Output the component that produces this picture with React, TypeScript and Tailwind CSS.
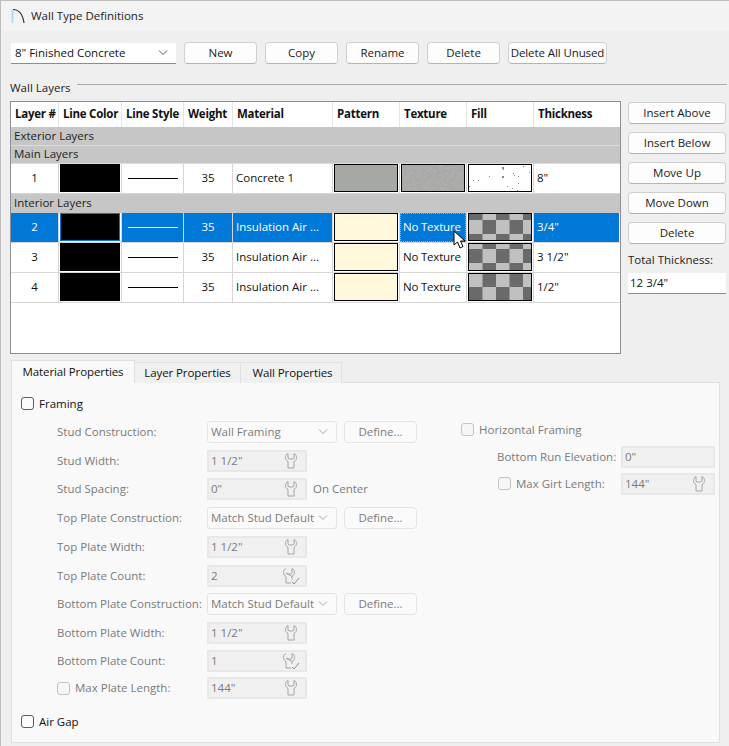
import type { ReactNode } from "react";

const COLUMNS = [
  { label: "Layer #", width: "w-[48px]" },
  { label: "Line Color", width: "w-[63px]" },
  { label: "Line Style", width: "w-[62px]" },
  { label: "Weight", width: "w-[49px]" },
  { label: "Material", width: "w-[100px]" },
  { label: "Pattern", width: "w-[67px]" },
  { label: "Texture", width: "w-[67px]" },
  { label: "Fill", width: "w-[67px]" },
  { label: "Thickness", width: "w-[85px]" },
];

const SPECKS = [
  [33, 2, 2], [44, 8, 1], [33, 11, 2], [20, 11, 1], [4, 15, 1], [9, 15, 1], [49, 11, 1],
  [49, 18, 1], [60, 7, 1], [54, 1, 1], [38, 21, 1], [43, 23, 1], [48, 25, 1], [0, 21, 1],
  [45, 10, 1], [34, 4, 1],
];

function WrenchIcon({ check }: { check?: boolean }) {
  return (
    <svg width="18" height="18" viewBox="0 0 18 18" fill="none" stroke="#a4a4a4" strokeWidth="1">
      <path d={check ? "M4 1.5 C2 2.5 1.5 4 1.5 5.5 C1.5 7.5 2.5 8.5 4 9.5 V16 H9 M10 9.5 C11.5 8.5 12.5 7.5 12.5 5.5 C12.5 4 12 2.5 10 1.5 V6 L9 7 H5 L4 6 Z M10 9.5 V12" : "M6 1.5 C4 2.5 3.5 4 3.5 5.5 C3.5 7.5 4.5 8.5 6 9.5 V16 H12 V9.5 C13.5 8.5 14.5 7.5 14.5 5.5 C14.5 4 14 2.5 12 1.5 V6 L11 7 H7 L6 6 Z"} />
      {check && <path d="M10 15 L12 17 L17 11" stroke="#8c8c8c" />}
    </svg>
  );
}

function Chevron({ color }: { color: string }) {
  return (
    <svg width="10" height="6" viewBox="0 0 10 6" fill="none" stroke={color} strokeWidth="1">
      <path d="M1 0.5 L5 4.5 L9 0.5" />
    </svg>
  );
}

function Button({ children, className }: { children: ReactNode; className: string }) {
  return (
    <button className={`flex h-[22px] items-center justify-center rounded-[4px] border border-[#d0d0d0] border-b-[#b4b4b4] bg-[#fdfdfd] text-[#1a1a1a] ${className}`}>
      {children}
    </button>
  );
}

function Checkbox({ disabled }: { disabled?: boolean }) {
  return (
    <span
      className={`block size-[13px] shrink-0 rounded-[3px] border ${
        disabled ? "border-[#c4c4c4] bg-[#f6f6f6]" : "border-[#5c5c5c] bg-[#fbfbfb]"
      }`}
    />
  );
}

function Checker({ startDark, id, offset }: { startDark: boolean; id: string; offset: number }) {
  const dark = "#6a6a6a";
  const light = "#c0c0c0";
  return (
    <svg width="63" height="26" className="block">
      <defs>
        <pattern id={id} width="27" height="28" patternUnits="userSpaceOnUse" patternTransform={`translate(0 ${offset})`}>
          <rect width="27" height="28" fill={startDark ? dark : light} />
          <rect x="13.5" width="13.5" height="14" fill={startDark ? light : dark} />
          <rect y="14" width="13.5" height="14" fill={startDark ? light : dark} />
        </pattern>
      </defs>
      <rect width="63" height="26" fill={`url(#${id})`} />
    </svg>
  );
}

function Swatch({ children, className }: { children?: ReactNode; className?: string }) {
  return (
    <div className={`mx-[1px] h-[28px] w-[65px] overflow-hidden border border-black ${className ?? ""}`}>
      {children}
    </div>
  );
}

function LayerRow({
  n,
  material,
  thickness,
  selected,
  id,
  startDark,
  offset,
}: {
  n: number;
  material: string;
  thickness: string;
  selected?: boolean;
  id: string;
  startDark: boolean;
  offset: number;
}) {
  const text = selected ? "text-white" : "text-[#111]";
  const cell = `flex h-full items-center border-r border-[#d6d6d6] ${text} ${selected ? "bg-[#0078d7]" : "bg-white"}`;
  return (
    <div className="flex h-[30px] border-b border-[#d6d6d6]">
      <div className={`${cell} w-[48px] justify-center`}>{n}</div>
      <div className="flex h-full w-[63px] items-center justify-center border-r border-[#d6d6d6] bg-white">
        <div className={`h-[28px] w-[60px] bg-black ${selected ? "border border-[#0078d7]" : ""}`} />
      </div>
      <div className={`${cell} w-[62px] justify-center`}>
        <div className={`h-px w-[50px] ${selected ? "bg-white" : "bg-black"}`} />
      </div>
      <div className={`${cell} w-[49px] justify-center`}>35</div>
      <div className={`${cell} w-[100px] pl-[3px]`}>{material}</div>
      <div className="flex h-full w-[67px] items-center border-r border-[#d6d6d6] bg-white">
        <Swatch className="bg-[#fff8dc]" />
      </div>
      <div className="flex h-full w-[67px] items-center border-r border-[#d6d6d6] bg-white">
        <div
          className={`flex h-full w-full items-center pl-[2px] tracking-[-0.2px] ${
            selected ? "border border-dotted border-[#f0a040] bg-[#0078d7] text-white" : "pl-[3px] text-[#111]"
          }`}
        >
          No Texture
        </div>
      </div>
      <div className="flex h-full w-[67px] items-center border-r border-[#d6d6d6] bg-white">
        <Swatch>
          <Checker id={id} startDark={startDark} offset={offset} />
        </Swatch>
      </div>
      <div className={`${cell} w-[85px] border-r-0 pl-[3px]`}>{thickness}</div>
    </div>
  );
}

function ConcreteRow() {
  return (
    <div className="flex h-[30px] border-b border-[#d6d6d6] bg-white text-[#111]">
      <div className="flex w-[48px] items-center justify-center border-r border-[#d6d6d6]">1</div>
      <div className="flex w-[63px] items-center justify-center border-r border-[#d6d6d6]">
        <div className="h-[28px] w-[60px] bg-black" />
      </div>
      <div className="flex w-[62px] items-center justify-center border-r border-[#d6d6d6]">
        <div className="h-px w-[50px] bg-black" />
      </div>
      <div className="flex w-[49px] items-center justify-center border-r border-[#d6d6d6]">35</div>
      <div className="flex w-[100px] items-center border-r border-[#d6d6d6] pl-[3px]">Concrete 1</div>
      <div className="flex w-[67px] items-center border-r border-[#d6d6d6]">
        <Swatch className="bg-[#a6a8a4]" />
      </div>
      <div className="flex w-[67px] items-center border-r border-[#d6d6d6]">
        <Swatch>
          <svg width="63" height="26" className="block">
            <filter id="concrete" x="0" y="0" width="100%" height="100%">
              <feTurbulence type="fractalNoise" baseFrequency="0.4" numOctaves="3" seed="4" />
              <feColorMatrix type="saturate" values="0" />
            </filter>
            <rect width="63" height="26" fill="#a8a9a7" />
            <rect width="63" height="26" filter="url(#concrete)" opacity="0.3" />
          </svg>
        </Swatch>
      </div>
      <div className="flex w-[67px] items-center border-r border-[#d6d6d6]">
        <Swatch className="bg-white">
          <svg width="63" height="26" className="block">
            {SPECKS.map(([x, y, s]) => (
              <rect key={`${x}-${y}`} x={x} y={y} width={s} height={s} fill="#8a8a8a" />
            ))}
          </svg>
        </Swatch>
      </div>
      <div className="flex w-[85px] items-center pl-[3px]">8"</div>
    </div>
  );
}

function SectionRow({ label, className }: { label: string; className: string }) {
  return (
    <div className={`flex items-center border-b border-[#dcdcdc] bg-[#c6c6c6] pl-[3px] text-[#222] ${className}`}>
      {label}
    </div>
  );
}

function Select({ value }: { value: string }) {
  return (
    <div className="flex h-[22px] w-[130px] items-center justify-between rounded-[3px] border border-[#e4e4e4] bg-[#fafafa] pl-[3px] pr-[8px] text-[#7a7a7a]">
      {value}
      <Chevron color="#a8a8a8" />
    </div>
  );
}

function Field({ value, w = "w-[100px]", icon = "wrench" }: { value: string; w?: string; icon?: "wrench" | "check" | "none" }) {
  return (
    <div className={`flex h-[22px] items-center justify-between border-2 border-[#e8e8e8] bg-[#f0f0f0] pl-[2px] pr-[5px] text-[#7a7a7a] ${w}`}>
      {value}
      {icon !== "none" && <WrenchIcon check={icon === "check"} />}
    </div>
  );
}

function DefineButton() {
  return (
    <div className="ml-[7px] flex h-[22px] w-[73px] items-center justify-center rounded-[4px] border border-[#e4e4e4] bg-[#fafafa] text-[#7a7a7a]">
      Define...
    </div>
  );
}

function FormRow({ label, height, children, check }: { label: string; height: string; children: ReactNode; check?: boolean }) {
  return (
    <div className={`flex items-center ${height}`}>
      <div className="flex w-[150px] items-center text-[#7a7a7a]">
        {check && (
          <span className="mr-[5px]">
            <Checkbox disabled />
          </span>
        )}
        {label}
      </div>
      {children}
    </div>
  );
}

export default function App() {
  return (
    <div className="h-[746px] w-[729px] overflow-hidden whitespace-nowrap border-l border-t border-[#bdbdbd] bg-[#efefef] text-[11.5px] leading-none text-[#111] [font-family:'Open_Sans','Noto_Sans',sans-serif]">
      {/* title bar */}
      <div className="flex h-[30px] items-center bg-[#f3f3f3] pl-[9px]">
        <svg width="16" height="16" viewBox="0 0 16 16" fill="none">
          <path d="M1.5 15 V2 H3.5 V15 Z" fill="#a8dcf5" />
          <path d="M3 1.5 C8 1.5 12.5 5 14 15" stroke="#333" strokeWidth="1.2" />
        </svg>
        <span className="ml-[5px] text-[#222]">Wall Type Definitions</span>
      </div>

      {/* type selector and buttons */}
      <div className="mt-[11px] flex items-center pl-[10px]">
        <div className="flex h-[21px] w-[165px] items-center justify-between border-b border-[#8c8c8c] bg-white pl-[4px] pr-[8px] text-[#111]">
          8" Finished Concrete
          <Chevron color="#555" />
        </div>
        <Button className="ml-[8px] w-[73px]">New</Button>
        <Button className="ml-[8px] w-[73px]">Copy</Button>
        <Button className="ml-[8px] w-[73px]">Rename</Button>
        <Button className="ml-[8px] w-[73px]">Delete</Button>
        <Button className="ml-[8px] w-[99px] tracking-[-0.1px]">Delete All Unused</Button>
      </div>

      {/* wall layers group */}
      <div className="mt-[18px] flex items-center pl-[9px] pr-[2px]">
        <span className="text-[#222]">Wall Layers</span>
        <div className="ml-[6px] h-px flex-1 -translate-y-[3px] bg-[#a8a8a8]" />
      </div>
      <div className="mt-[7px] flex pl-[9px]">
        <div className="h-[253px] w-[611px] border border-[#8e8e96] bg-white">
          <div className="flex h-[25px] font-bold tracking-[-0.25px] text-[#111]">
            {COLUMNS.map((c, i) => (
              <div
                key={c.label}
                className={`flex items-center pl-[4px] ${c.width} ${i < COLUMNS.length - 1 ? "border-r border-[#e4e4e4]" : ""}`}
              >
                {c.label}
              </div>
            ))}
          </div>
          <SectionRow label="Exterior Layers" className="h-[19px]" />
          <SectionRow label="Main Layers" className="h-[18px]" />
          <ConcreteRow />
          <SectionRow label="Interior Layers" className="h-[19px] border-b-0" />
          <LayerRow n={2} material="Insulation Air ..." thickness={'3/4"'} selected id="fill2" startDark offset={-8} />
          <LayerRow n={3} material="Insulation Air ..." thickness={'3 1/2"'} id="fill3" startDark={false} offset={-9} />
          <LayerRow n={4} material="Insulation Air ..." thickness={'1/2"'} id="fill4" startDark={false} offset={-1} />
        </div>

        <div className="ml-[7px] mt-[1px] flex w-[98px] flex-col">
          <Button className="w-full">Insert Above</Button>
          <Button className="mt-[8px] w-full">Insert Below</Button>
          <Button className="mt-[8px] w-full">Move Up</Button>
          <Button className="mt-[8px] w-full">Move Down</Button>
          <Button className="mt-[8px] w-full">Delete</Button>
          <div className="mt-[10px] text-[#222]">Total Thickness:</div>
          <div className="mt-[8px] flex h-[21px] items-center border-b border-[#8c8c8c] bg-white pl-[2px]">12 3/4"</div>
        </div>
      </div>

      {/* tabs */}
      <div className="relative z-10 mt-[6px] flex items-end pl-[10px] tracking-[-0.1px]">
        <div className="flex h-[23px] w-[124px] items-center justify-center border border-b-0 border-[#e0e0e0] bg-[#f9f9f9] text-[#111]">
          Material Properties
        </div>
        <div className="flex h-[21px] w-[106px] items-center justify-center border-r border-t border-[#e0e0e0] bg-[#f0f0f0]">
          Layer Properties
        </div>
        <div className="flex h-[21px] w-[101px] items-center justify-center border-r border-t border-[#e0e0e0] bg-[#f0f0f0] pl-[3px]">
          Wall Properties
        </div>
      </div>

      {/* material properties panel */}
      <div className="ml-[10px] h-[361px] w-[709px] -translate-y-px border border-[#e0e0e0] bg-[#f9f9f9] pl-[9px] pt-[13px]">
        <label className="flex h-[16px] items-center gap-[5px]">
          <Checkbox />
          Framing
        </label>
        <div className="flex">
          <div className="ml-[36px] mt-[6px] w-[380px]">
            <FormRow label="Stud Construction:" height="h-[29px]">
              <Select value="Wall Framing" />
              <DefineButton />
            </FormRow>
            <FormRow label="Stud Width:" height="h-[28px]">
              <Field value={'1 1/2"'} />
            </FormRow>
            <FormRow label="Stud Spacing:" height="h-[29px]">
              <Field value={'0"'} />
              <span className="ml-[6px] text-[#7a7a7a]">On Center</span>
            </FormRow>
            <FormRow label="Top Plate Construction:" height="h-[29px]">
              <Select value="Match Stud Default" />
              <DefineButton />
            </FormRow>
            <FormRow label="Top Plate Width:" height="h-[29px]">
              <Field value={'1 1/2"'} />
            </FormRow>
            <FormRow label="Top Plate Count:" height="h-[28px]">
              <Field value="2" icon="check" />
            </FormRow>
            <FormRow label="Bottom Plate Construction:" height="h-[29px]">
              <Select value="Match Stud Default" />
              <DefineButton />
            </FormRow>
            <FormRow label="Bottom Plate Width:" height="h-[29px]">
              <Field value={'1 1/2"'} />
            </FormRow>
            <FormRow label="Bottom Plate Count:" height="h-[27px]">
              <Field value="1" icon="check" />
            </FormRow>
            <FormRow label="Max Plate Length:" height="h-[27px]" check>
              <Field value={'144"'} />
            </FormRow>
          </div>
          <div className="ml-[24px] w-[254px]">
            <label className="mt-[10px] flex h-[16px] items-center gap-[5px] text-[#7a7a7a]">
              <Checkbox disabled />
              Horizontal Framing
            </label>
            <div className="mt-[8px] flex h-[22px] items-center pl-[36px] text-[#7a7a7a]">
              <span className="w-[124px]">Bottom Run Elevation:</span>
              <Field value={'0"'} w="w-[94px]" icon="none" />
            </div>
            <div className="mt-[5px] flex h-[22px] items-center pl-[37px] text-[#7a7a7a]">
              <span className="mr-[5px]">
                <Checkbox disabled />
              </span>
              <span className="w-[105px]">Max Girt Length:</span>
              <Field value={'144"'} w="w-[94px]" />
            </div>
          </div>
        </div>
        <label className="mt-[12px] flex h-[16px] items-center gap-[5px]">
          <Checkbox />
          Air Gap
        </label>
      </div>

      {/* mouse cursor over the selected row */}
      <svg width="14" height="20" viewBox="0 0 14 20" className="absolute left-[453px] top-[230px] z-20">
        <path d="M1 1 V15 L4.5 12 L7 18 L10 16.5 L7.5 11 H12 Z" fill="white" stroke="black" strokeWidth="1" />
      </svg>
    </div>
  );
}
